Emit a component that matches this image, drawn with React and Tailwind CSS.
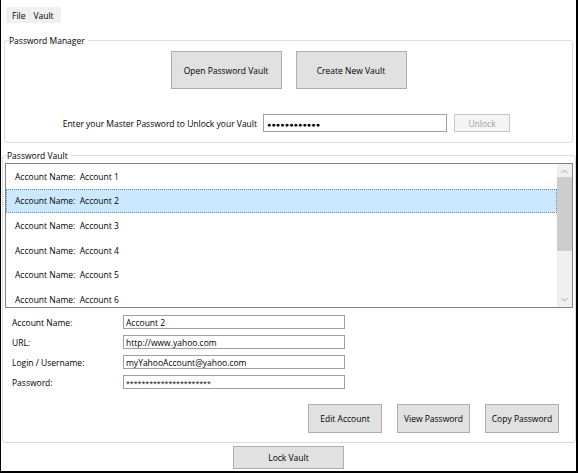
import { useState } from "react";

const accounts = ["Account 1", "Account 2", "Account 3", "Account 4", "Account 5", "Account 6"];

const fields = [
  { label: "Account Name:", value: "Account 2" },
  { label: "URL:", value: "http://www.yahoo.com" },
  { label: "Login / Username:", value: "myYahooAccount@yahoo.com" },
  { label: "Password:", value: "**********************", small: true },
];

function WinButton({ children, className = "" }) {
  return (
    <button
      type="button"
      className={`bg-[#e1e1e1] border border-[#adadad] text-black flex items-center justify-center ${className}`}
    >
      {children}
    </button>
  );
}

export default function App() {
  const [selected, setSelected] = useState(1);

  return (
    <div className="w-[578px] h-[473px] bg-white border-l border-r-2 border-b-2 border-black font-['Open_Sans',sans-serif] text-[8.5px] font-medium leading-[15px] text-black flex flex-col overflow-hidden">
      {/* Menu */}
      <div className="mt-[7px] ml-[5px] w-[55px] h-[16px] bg-[#f0f0f0] flex items-center gap-[8px] pl-[6px]">
        <span>File</span>
        <span>Vault</span>
      </div>

      {/* Password Manager group */}
      <fieldset className="mt-[10px] ml-[3px] w-[569px] h-[110px] border border-[#dcdcdc] rounded-[3px] flex flex-col">
        <legend className="ml-[4px] pr-[3px]">Password Manager</legend>
        <div className="mt-[3px] flex justify-center gap-[14px]">
          <WinButton className="w-[111px] h-[38px]">Open Password Vault</WinButton>
          <WinButton className="w-[111px] h-[38px]">Create New Vault</WinButton>
        </div>
        <div className="mt-[25px] flex items-center justify-end pr-[62px]">
          <span>Enter your Master Password to Unlock your Vault</span>
          <div className="ml-[6px] w-[184px] h-[18px] border border-[#a0a0a0] flex items-center pl-[3px] text-[7px] tracking-[0.2px] leading-none pt-[2px]">
            ●●●●●●●●●●●●
          </div>
          <button
            type="button"
            className="ml-[7px] w-[56px] h-[18px] bg-[#f4f4f4] border border-[#c8c8c8] text-[#a0a0a0] flex items-center justify-center"
          >
            Unlock
          </button>
        </div>
      </fieldset>

      {/* Password Vault group */}
      <fieldset className="mt-[5px] ml-px w-[574px] h-[295px] border border-[#dcdcdc] rounded-[3px] flex flex-col">
        <legend className="ml-[4px] pr-[3px]">Password Vault</legend>

        {/* List box */}
        <div className="ml-[2px] w-[568px] h-[145px] border border-[#828282] flex">
          <div className="flex-1 flex flex-col overflow-hidden">
            {accounts.map((a, i) => (
              <div
                key={a}
                onClick={() => setSelected(i)}
                className={`h-[24.6px] shrink-0 flex items-center pl-[8px] whitespace-pre ${
                  i === selected ? "bg-[#cce8ff] border border-dotted border-[#5f8fb8]" : "border border-transparent"
                }`}
              >
                {`Account Name:  ${a}`}
              </div>
            ))}
          </div>
          <div className="w-[15px] bg-[#f0f0f0] flex flex-col items-center">
            <svg width="9" height="13" viewBox="0 0 9 13" className="mt-[1px]">
              <path d="M1.5 8 L4.5 5 L7.5 8" fill="none" stroke="#a3a3a3" strokeWidth="1" />
            </svg>
            <div className="mt-[-1px] w-[15px] h-[74px] bg-[#cdcdcd]" />
            <div className="flex-1" />
            <svg width="9" height="13" viewBox="0 0 9 13" className="mb-[1px]">
              <path d="M1.5 5 L4.5 8 L7.5 5" fill="none" stroke="#a3a3a3" strokeWidth="1" />
            </svg>
          </div>
        </div>

        {/* Details */}
        <div className="mt-[7px] flex flex-col gap-[6px]">
          {fields.map((f) => (
            <div key={f.label} className="flex items-center h-[14px]">
              <span className="pl-[9px] w-[120px]">{f.label}</span>
              <div
                className={`w-[222px] h-[14px] border border-[#a0a0a0] flex items-center pl-[2px] ${
                  f.small ? "text-[7px] leading-none pt-[2px]" : ""
                }`}
              >
                {f.value}
              </div>
            </div>
          ))}
        </div>

        <div className="mt-[15px] flex justify-end gap-[15px] pr-[16px]">
          <WinButton className="w-[74px] h-[29px]">Edit Account</WinButton>
          <WinButton className="w-[73px] h-[29px]">View Password</WinButton>
          <WinButton className="w-[74px] h-[29px]">Copy Password</WinButton>
        </div>
      </fieldset>

      <div className="mt-[3px] flex justify-center">
        <WinButton className="w-[111px] h-[23px]">Lock Vault</WinButton>
      </div>
    </div>
  );
}
